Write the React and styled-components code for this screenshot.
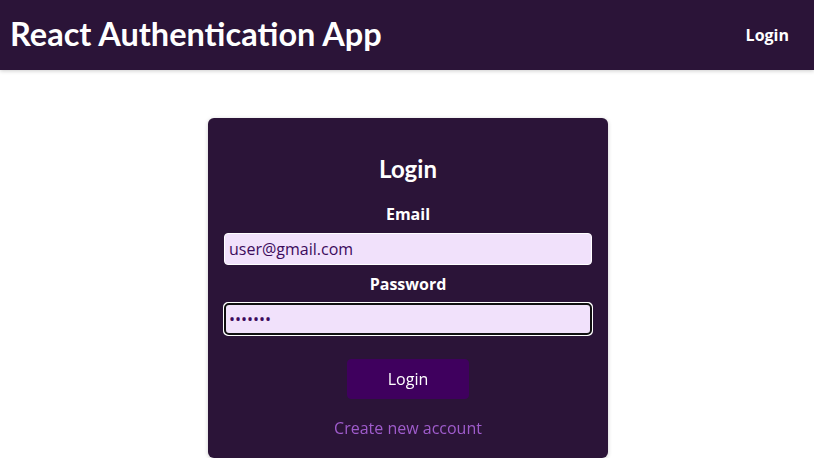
import styled, { createGlobalStyle } from "styled-components";

const GlobalStyle = createGlobalStyle`
  * {
    box-sizing: border-box;
  }
  html, body {
    margin: 0;
    background: #ffffff;
    font-family: "Open Sans", "Liberation Sans", sans-serif;
  }
`;

export default function App() {
  return (
    <>
      <GlobalStyle />
      <Header>
        <Logo>React Authentication App</Logo>
        <Nav>
          <NavLink href="#">Login</NavLink>
        </Nav>
      </Header>
      <Main>
        <AuthCard>
          <Title>Login</Title>
          <form onSubmit={(e) => e.preventDefault()}>
            <Control>
              <Label htmlFor="email">Email</Label>
              <Input id="email" type="email" defaultValue="user@gmail.com" />
            </Control>
            <Control>
              <Label htmlFor="password">Password</Label>
              <Input id="password" type="password" defaultValue="1234567" autoFocus />
            </Control>
            <Actions>
              <SubmitBtn>Login</SubmitBtn>
              <ToggleBtn type="button">Create new account</ToggleBtn>
            </Actions>
          </form>
        </AuthCard>
      </Main>
    </>
  );
}

const Header = styled.header`
  width: 100%;
  height: 70px;
  background: #2b1438;
  box-shadow: 0 1px 4px rgba(0, 0, 0, 0.2);
  display: flex;
  justify-content: space-between;
  align-items: center;
  padding: 0 25px 3px 10px;
`;

const Logo = styled.div`
  font-family: Lato, "Open Sans", sans-serif;
  font-size: 32.5px;
  font-weight: bold;
  color: #ffffff;
`;

const Nav = styled.nav`
  display: flex;
  align-items: center;
  padding-top: 3px;
`;

const NavLink = styled.a`
  color: #ffffff;
  font-weight: bold;
  font-size: 16px;
  text-decoration: none;
`;

const Main = styled.main`
  padding-left: 2px;
`;

const AuthCard = styled.section`
  margin: 48px auto 0;
  width: 400px;
  border-radius: 6px;
  background: #2b1438;
  box-shadow: 0 1px 4px rgba(0, 0, 0, 0.2);
  padding: 16px;
  text-align: center;
`;

const Title = styled.h1`
  font-family: Lato, "Open Sans", sans-serif;
  font-size: 24px;
  color: #ffffff;
  margin: 20px 0 20px;
  line-height: 29px;
`;

const Control = styled.div`
  margin-bottom: 8px;
`;

const Label = styled.label`
  display: block;
  color: #ffffff;
  font-weight: bold;
  margin-bottom: 8px;
  line-height: 22px;
`;

const Input = styled.input`
  font: inherit;
  line-height: 22px;
  background: #f1e1fb;
  color: #3c0b5c;
  caret-color: #3c0b5c;
  border-radius: 4px;
  border: 1px solid #ffffff;
  width: 100%;
  text-align: left;
  padding: 4px;
`;

const Actions = styled.div`
  margin-top: 24px;
  display: flex;
  flex-direction: column;
  align-items: center;
`;

const SubmitBtn = styled.button`
  cursor: pointer;
  font: inherit;
  line-height: 22px;
  color: #ffffff;
  background: #3f005e;
  border: 1px solid #3f005e;
  border-radius: 4px;
  padding: 8px 40px;
`;

const ToggleBtn = styled.button`
  margin-top: 16px;
  background: transparent;
  color: #9f5ccc;
  border: none;
  font: inherit;
  line-height: 22px;
  padding: 2px 24px 3px;
  cursor: pointer;
`;
